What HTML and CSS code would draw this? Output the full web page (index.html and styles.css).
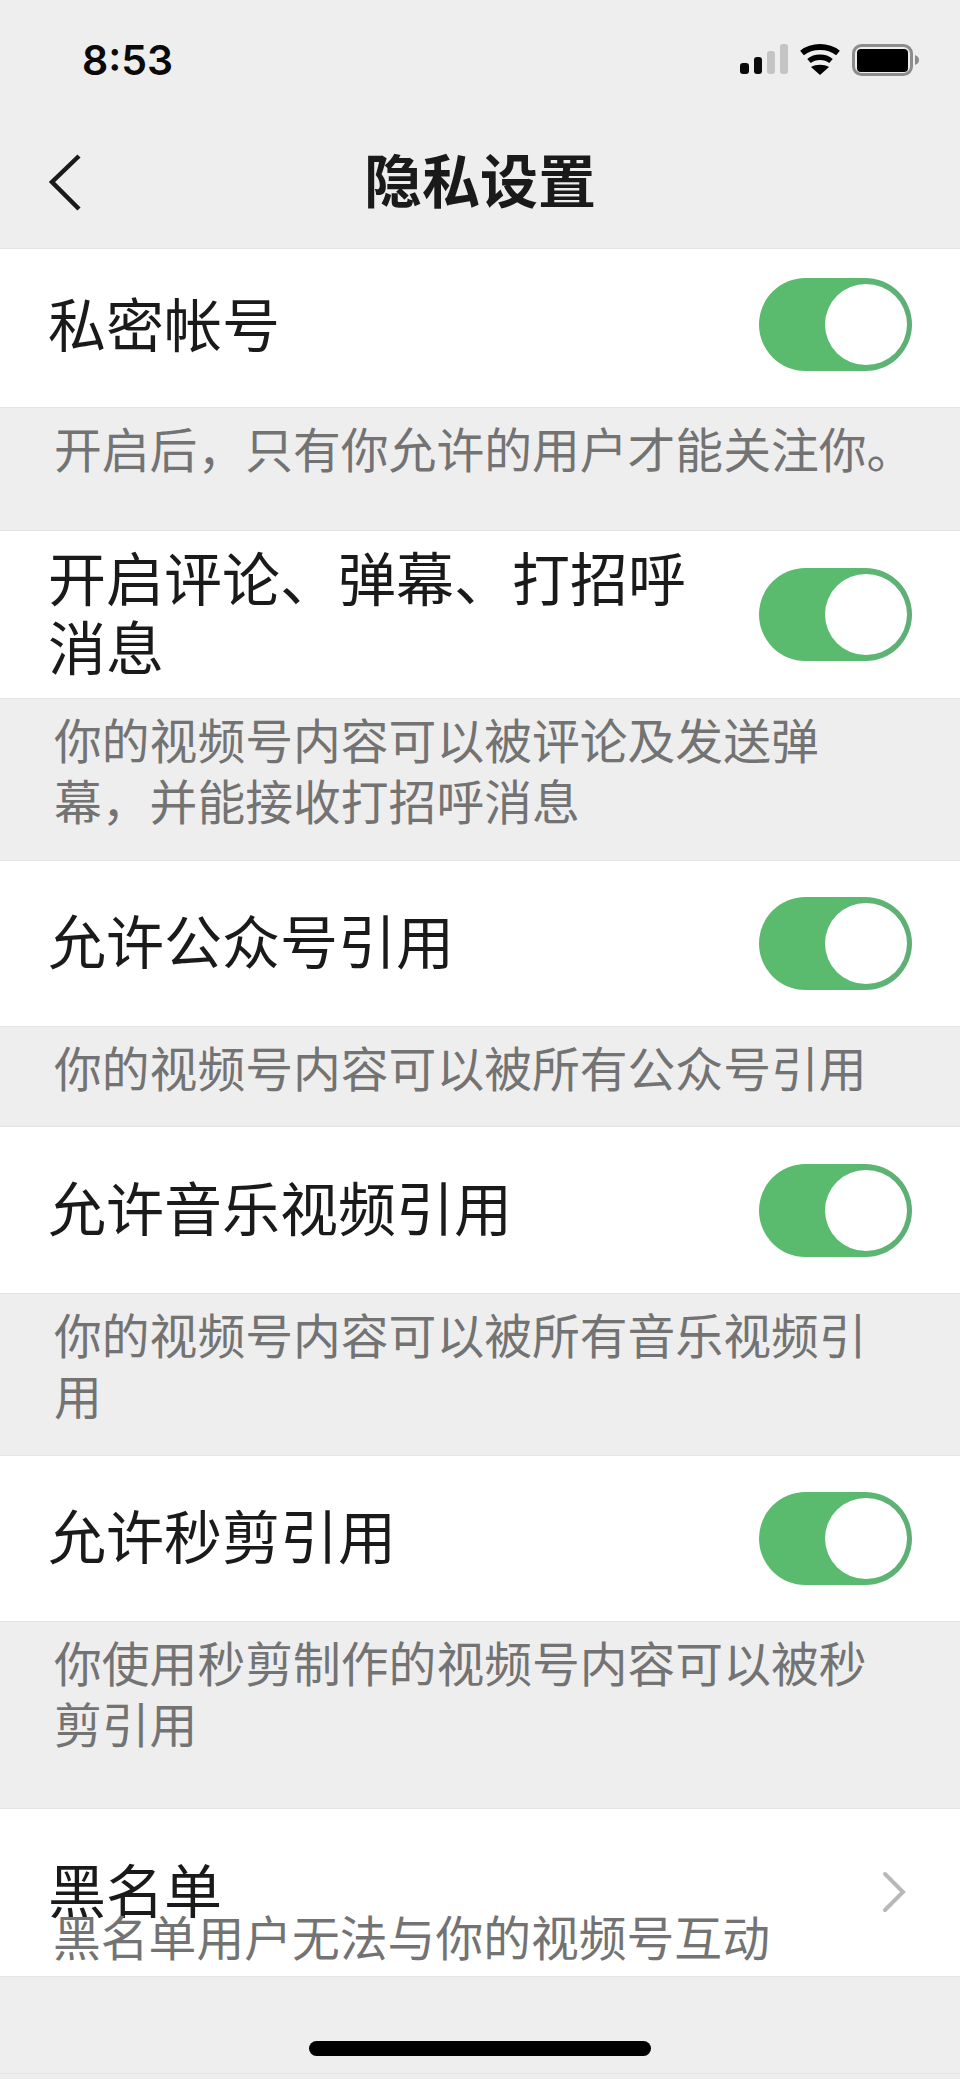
FILE: index.html
```html
<!DOCTYPE html>
<html lang="zh-CN">
<head>
    <meta charset="UTF-8">
    <meta name="viewport" content="width=device-width, initial-scale=1.0">
    <title>隐私设置</title>
    <link rel="stylesheet" href="styles.css">
</head>
<body>
    <div class="status-bar">
        <span class="time">8:53</span>
        <div class="status-icons">
            <svg class="signal" width="48" height="31" viewBox="0 0 48 31">
                <rect x="0" y="19" width="9" height="11" rx="3" fill="#0a0a0a"/>
                <rect x="14" y="13" width="8" height="17" rx="3" fill="#0a0a0a"/>
                <rect x="27" y="7" width="8" height="23" rx="3" fill="#c4c4c4"/>
                <rect x="40" y="0" width="8" height="30" rx="3" fill="#c4c4c4"/>
            </svg>
            <svg class="wifi" width="40" height="31" viewBox="0 0 40 31">
                <path d="M2 9 C12 1 28 1 38 9" fill="none" stroke="#000" stroke-width="6"/>
                <path d="M9 17 C15 12 25 12 31 17" fill="none" stroke="#000" stroke-width="5.5"/>
                <path d="M20 31 L11 23 C16 20 24 20 29 23 Z" fill="#000"/>
            </svg>
            <svg class="battery" width="67" height="32" viewBox="0 0 67 32">
                <rect x="1.5" y="1.5" width="58" height="29" rx="8" fill="none" stroke="#8c8c8c" stroke-width="3"/>
                <rect x="5" y="5" width="51" height="23" rx="4" fill="#000"/>
                <path d="M63 11 C66 12 67 14 67 16 C67 18 66 20 63 21 Z" fill="#8c8c8c"/>
            </svg>
        </div>
    </div>

    <header class="nav-bar">
        <svg class="back" width="34" height="60" viewBox="0 0 34 60">
            <path d="M31 2 L4 28 L31 55" fill="none" stroke="#1a1a1a" stroke-width="4.5"/>
        </svg>
        <h1>隐私设置</h1>
    </header>

    <div class="row row-first">
        <span class="row-title">私密帐号</span>
        <span class="switch"><span class="knob"></span></span>
    </div>
    <p class="note note-first">开启后&#65292;只有你允许的用户才能关注你。</p>

    <div class="row row-second">
        <span class="row-title">开启评论、弹幕、打招呼<br>消息</span>
        <span class="switch"><span class="knob"></span></span>
    </div>
    <p class="note note-second">你的视频号内容可以被评论及发送弹<br>幕&#65292;并能接收打招呼消息</p>

    <div class="row row-short">
        <span class="row-title">允许公众号引用</span>
        <span class="switch"><span class="knob"></span></span>
    </div>
    <p class="note note-third">你的视频号内容可以被所有公众号引用</p>

    <div class="row">
        <span class="row-title">允许音乐视频引用</span>
        <span class="switch"><span class="knob"></span></span>
    </div>
    <p class="note note-fourth">你的视频号内容可以被所有音乐视频引<br>用</p>

    <div class="row row-short">
        <span class="row-title">允许秒剪引用</span>
        <span class="switch"><span class="knob"></span></span>
    </div>
    <p class="note note-fifth">你使用秒剪制作的视频号内容可以被秒<br>剪引用</p>

    <div class="row row-blacklist">
        <div class="blacklist-text">
            <span class="row-title">黑名单</span>
            <span class="row-note">黑名单用户无法与你的视频号互动</span>
        </div>
        <svg class="chevron" width="24" height="42" viewBox="0 0 24 42">
            <path d="M3 3 L21 21 L3 39" fill="none" stroke="#b8b8b8" stroke-width="4" stroke-linecap="round"/>
        </svg>
    </div>

    <div class="home-area">
        <div class="home-bar"></div>
    </div>
</body>
</html>
```

FILE: styles.css
```css
* {
    box-sizing: border-box;
}

html, body {
    margin: 0;
    height: 2079px;
    overflow: hidden;
}

body {
    font-family: "Noto Sans CJK SC", "Liberation Sans", sans-serif;
    background-color: #eeeeee;
    color: #1a1a1a;
}

.status-bar {
    height: 116px;
    display: flex;
    justify-content: space-between;
    align-items: center;
    padding: 3px 41px 0 82px;
}

.time {
    font-family: "Inter", sans-serif;
    font-size: 41px;
    font-weight: 600;
    color: #0a0a0a;
}

.status-icons {
    display: flex;
    align-items: center;
    gap: 12px;
}

.nav-bar {
    height: 133px;
    padding-bottom: 8px;
    display: flex;
    align-items: center;
    justify-content: center;
    position: relative;
    border-bottom: 1px solid #e2e2e2;
}

.back {
    position: absolute;
    left: 48px;
    top: 38px;
}

h1 {
    margin: 0;
    font-size: 58px;
    font-weight: 700;
    line-height: 1;
}

.row {
    height: 166px;
    padding: 0 48px;
    display: flex;
    justify-content: space-between;
    align-items: center;
    background-color: #ffffff;
}

.row-first {
    height: 158px;
}

.row-first .switch {
    margin-bottom: 7px;
}

.row-second {
    height: 167px;
}

.row-short {
    height: 165px;
}

.row-title {
    font-size: 58px;
    line-height: 69px;
    margin-bottom: 8px;
}

.row-first .row-title {
    margin-bottom: 12px;
}

.switch {
    width: 153px;
    height: 93px;
    padding: 6px 5px;
    border-radius: 47px;
    display: flex;
    justify-content: flex-end;
    background: linear-gradient(90deg, #5abb6f 55%, #5fae76);
}

.knob {
    width: 82px;
    height: 81px;
    border-radius: 50%;
    background-color: #ffffff;
}

.note {
    margin: 0;
    padding: 9px 20px 0 54px;
    font-size: 47.8px;
    line-height: 61px;
    color: #737373;
    border-top: 1px solid #e4e4e4;
    border-bottom: 1px solid #e4e4e4;
}

.note-first {
    height: 124px;
}

.note-second {
    height: 163px;
}

.note-third {
    height: 101px;
}

.note-fourth {
    height: 163px;
}

.note-fifth {
    height: 188px;
}

.row-blacklist {
    height: 167px;
    padding-right: 54px;
    align-items: flex-start;
}

.blacklist-text {
    display: flex;
    flex-direction: column;
    padding-top: 45px;
}

.blacklist-text .row-title {
    margin-bottom: 0;
}

.row-note {
    font-size: 47.8px;
    line-height: 46px;
    padding-left: 5px;
    margin-top: -10px;
    color: #737373;
}

.chevron {
    margin-top: 62px;
}

.home-area {
    height: 98px;
    border-top: 1px solid #e4e4e4;
    border-bottom: 1px solid #e4e4e4;
    display: flex;
    justify-content: center;
    padding-top: 64px;
}

.home-bar {
    width: 342px;
    height: 15px;
    border-radius: 8px;
    background-color: #000000;
}
```
